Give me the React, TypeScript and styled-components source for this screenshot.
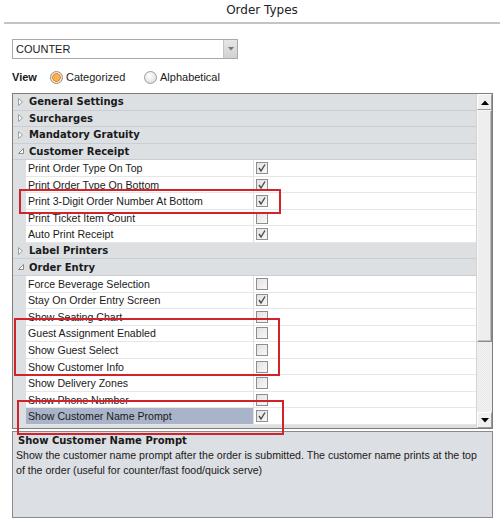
import React from "react";
import styled, { createGlobalStyle } from "styled-components";

const GlobalStyle = createGlobalStyle`
  html, body { margin: 0; padding: 0; background: #ffffff; }
  body { font-family: "Liberation Sans", Arial, sans-serif; font-size: 10.6px; color: #1a1a1a; }
  * { box-sizing: border-box; }
`;

const Page = styled.div`
  width: 500px;
  height: 523px;
  position: relative;
  overflow: hidden;
`;

const Header = styled.div`
  margin-left: 4px;
  height: 24px;
  border-bottom: 2px solid #c4c4c4;
  display: flex;
  align-items: center;
  justify-content: center;
  font-family: "DejaVu Sans", Verdana, sans-serif;
  font-size: 12px;
  color: #222;
  padding-left: 20px;
  padding-bottom: 2px;
`;

const Body = styled.div`
  padding: 15px 7px 0 12px;
`;

const Select = styled.div`
  width: 226px;
  height: 20px;
  border: 1px solid #a9a9a9;
  display: flex;
  align-items: stretch;
  background: #fff;
`;

const SelectText = styled.div`
  flex: 1;
  padding-left: 3px;
  display: flex;
  align-items: center;
  font-size: 11px;
`;

const SelectButton = styled.div`
  width: 14px;
  background: linear-gradient(#e6e6e6, #d2d2d2);
  border-left: 1px solid #c4c4c4;
  display: flex;
  align-items: center;
  justify-content: center;
`;

const ViewRow = styled.div`
  margin-top: 10px;
  height: 16px;
  display: flex;
  align-items: center;
  font-size: 11px;
`;

const ViewLabel = styled.span`
  font-weight: bold;
  width: 38px;
`;

const RadioLabel = styled.label<{ $w: number }>`
  display: flex;
  align-items: center;
  gap: 3px;
  width: ${(p) => p.$w}px;
`;

const RadioCircle = styled.span<{ $on?: boolean }>`
  width: 13px;
  height: 13px;
  border-radius: 50%;
  border: 1px solid ${(p) => (p.$on ? "#9a8f7e" : "#9c9c9c")};
  background: ${(p) => (p.$on ? "radial-gradient(circle, #f7b35a 0 3px, #e58a1c 3.5px 4px, #f3e6d6 4.5px)" : "radial-gradient(circle at 40% 35%, #ffffff, #d6d6d6)")};
  display: inline-block;
`;

const Grid = styled.div`
  margin-top: 8px;
  width: 481px;
  height: 336px;
  border: 1px solid #7d7d7d;
  box-shadow: inset 0 0 0 1px #c8c8c8;
  display: flex;
  background: #fff;
`;

const Rows = styled.div`
  flex: 1;
  overflow: hidden;
`;

const CatRow = styled.div`
  height: 16.55px;
  background: #dde0e3;
  border-bottom: 1px solid #cacdd1;
  display: flex;
  align-items: center;
  font-weight: bold;
  font-family: "DejaVu Sans", Verdana, sans-serif;
  font-size: 10px;
`;

const Expander = styled.span`
  width: 16px;
  display: flex;
  align-items: center;
  justify-content: center;
`;

const PropRow = styled.div`
  height: 16.55px;
  display: flex;
  background: #dde0e3;
`;

const NameCell = styled.div<{ $sel?: boolean }>`
  margin-left: 13px;
  width: 227px;
  padding-left: 2px;
  background: ${(p) => (p.$sel ? "#a9b3c9" : "#fff")};
  border-bottom: 1px solid #e6e6e6;
  display: flex;
  align-items: center;
  white-space: nowrap;
  overflow: hidden;
`;

const ValueCell = styled.div`
  flex: 1;
  background: #fff;
  border-left: 1px solid #dedede;
  border-bottom: 1px solid #e6e6e6;
  display: flex;
  align-items: center;
  padding-left: 2px;
`;

const Check = styled.span`
  width: 12px;
  height: 12px;
  border: 1px solid #8e8e8e;
  background: linear-gradient(135deg, #e2e2e2, #f8f8f8);
  display: flex;
  align-items: center;
  justify-content: center;
`;

const Scrollbar = styled.div`
  width: 16px;
  display: flex;
  flex-direction: column;
  border-left: 1px solid #d4d4d4;
  background-color: #f4f4f4;
  background-image: linear-gradient(45deg, #e8e8e8 25%, transparent 25%, transparent 75%, #e8e8e8 75%), linear-gradient(45deg, #e8e8e8 25%, transparent 25%, transparent 75%, #e8e8e8 75%);
  background-size: 2px 2px;
  background-position: 0 0, 1px 1px;
`;

const ScrollBtn = styled.div`
  height: 16px;
  background: #f0f0f0;
  border: 1px solid #9a9a9a;
  border-top-color: #fff;
  border-left-color: #fff;
  display: flex;
  align-items: center;
  justify-content: center;
`;

const Thumb = styled.div`
  height: 232px;
  background: #eeeeee;
  border: 1px solid #8a8a8a;
  border-top-color: #f8f8f8;
  border-left-color: #f8f8f8;
  box-shadow: inset -1px -1px 0 #c0c0c0;
`;

const Track = styled.div`
  flex: 1;
`;

const Desc = styled.div`
  margin-top: 2px;
  width: 481px;
  height: 87px;
  border: 1px solid #8a8a8a;
  background: #dcdfe3;
  padding: 1px 4px 0 3px;
`;

const DescTitle = styled.div`
  font-family: "DejaVu Sans", Verdana, sans-serif;
  font-weight: bold;
  font-size: 10px;
  margin-left: 2px;
  height: 15px;
  display: flex;
  align-items: center;
`;

const DescText = styled.div`
  line-height: 15px;
`;

const Annot = styled.div`
  position: absolute;
  border: 2px solid #d2232a;
  pointer-events: none;
`;

type Row =
  | { kind: "cat"; label: string; open: boolean }
  | { kind: "prop"; label: string; checked: boolean; sel?: boolean };

const rows: Row[] = [
  { kind: "cat", label: "General Settings", open: false },
  { kind: "cat", label: "Surcharges", open: false },
  { kind: "cat", label: "Mandatory Gratuity", open: false },
  { kind: "cat", label: "Customer Receipt", open: true },
  { kind: "prop", label: "Print Order Type On Top", checked: true },
  { kind: "prop", label: "Print Order Type On Bottom", checked: true },
  { kind: "prop", label: "Print 3-Digit Order Number At Bottom", checked: true },
  { kind: "prop", label: "Print Ticket Item Count", checked: false },
  { kind: "prop", label: "Auto Print Receipt", checked: true },
  { kind: "cat", label: "Label Printers", open: false },
  { kind: "cat", label: "Order Entry", open: true },
  { kind: "prop", label: "Force Beverage Selection", checked: false },
  { kind: "prop", label: "Stay On Order Entry Screen", checked: true },
  { kind: "prop", label: "Show Seating Chart", checked: false },
  { kind: "prop", label: "Guest Assignment Enabled", checked: false },
  { kind: "prop", label: "Show Guest Select", checked: false },
  { kind: "prop", label: "Show Customer Info", checked: false },
  { kind: "prop", label: "Show Delivery Zones", checked: false },
  { kind: "prop", label: "Show Phone Number", checked: false },
  { kind: "prop", label: "Show Customer Name Prompt", checked: true, sel: true },
  { kind: "cat", label: "Order Types", open: true },
];

const Tri = ({ open }: { open: boolean }) =>
  open ? (
    <svg width="8" height="8" viewBox="0 0 8 8">
      <polygon points="6.5,1.5 6.5,6.5 1.5,6.5" fill="#fff" stroke="#8a8a8a" strokeWidth="1" />
    </svg>
  ) : (
    <svg width="8" height="10" viewBox="0 0 8 10">
      <polygon points="1.5,1.5 5.5,5 1.5,8.5" fill="#fff" stroke="#a0a0a0" strokeWidth="1" />
    </svg>
  );

const CheckMark = () => (
  <svg width="10" height="10" viewBox="0 0 10 10">
    <path d="M2 5 L4 8 L8 1.5" fill="none" stroke="#4a4a4a" strokeWidth="1.4" />
  </svg>
);

const Arrow = ({ up }: { up?: boolean }) => (
  <svg width="8" height="5" viewBox="0 0 8 5">
    <polygon points={up ? "0,5 4,0.5 8,5" : "0,0 8,0 4,4.5"} fill="#000" />
  </svg>
);

export default function App() {
  return (
    <Page>
      <GlobalStyle />
      <Header>Order Types</Header>
      <Body>
        <Select>
          <SelectText>COUNTER</SelectText>
          <SelectButton>
            <svg width="6" height="4" viewBox="0 0 6 4">
              <polygon points="0,0 6,0 3,3.5" fill="#777" />
            </svg>
          </SelectButton>
        </Select>
        <ViewRow>
          <ViewLabel>View</ViewLabel>
          <RadioLabel $w={94}>
            <RadioCircle $on />
            Categorized
          </RadioLabel>
          <RadioLabel $w={100}>
            <RadioCircle />
            Alphabetical
          </RadioLabel>
        </ViewRow>
        <Grid>
          <Rows>
            {rows.map((r, i) =>
              r.kind === "cat" ? (
                <CatRow key={i}>
                  <Expander>
                    <Tri open={r.open} />
                  </Expander>
                  {r.label}
                </CatRow>
              ) : (
                <PropRow key={i}>
                  <NameCell $sel={r.sel}>{r.label}</NameCell>
                  <ValueCell>
                    <Check>{r.checked && <CheckMark />}</Check>
                  </ValueCell>
                </PropRow>
              )
            )}
          </Rows>
          <Scrollbar>
            <ScrollBtn>
              <Arrow up />
            </ScrollBtn>
            <Thumb />
            <Track />
            <ScrollBtn>
              <Arrow />
            </ScrollBtn>
          </Scrollbar>
        </Grid>
        <Desc>
          <DescTitle>Show Customer Name Prompt</DescTitle>
          <DescText>
            Show the customer name prompt after the order is submitted. The customer name prints at the top of the order (useful for counter/fast food/quick serve)
          </DescText>
        </Desc>
      </Body>
      <Annot style={{ left: 19, top: 189, width: 262, height: 25 }} />
      <Annot style={{ left: 14, top: 318, width: 266, height: 58 }} />
      <Annot style={{ left: 17, top: 400, width: 267, height: 35 }} />
    </Page>
  );
}
